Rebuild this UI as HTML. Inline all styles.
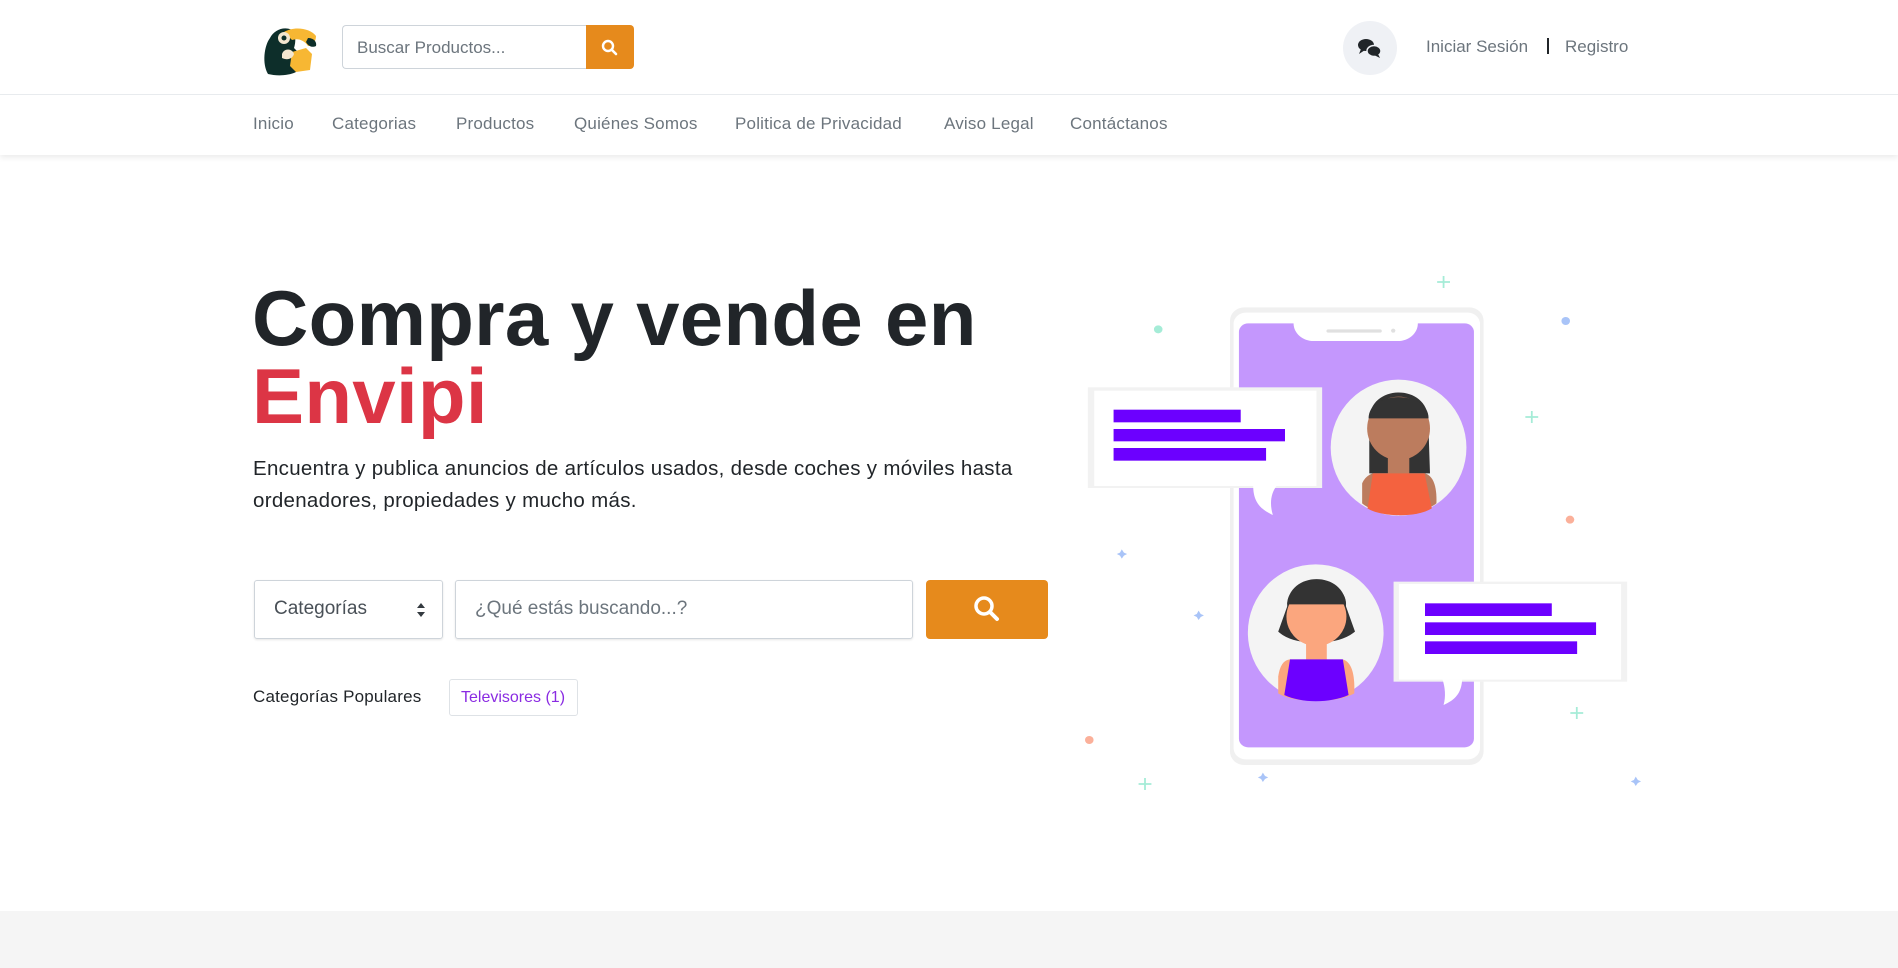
<!DOCTYPE html>
<html><head><meta charset="utf-8">
<style>
*{box-sizing:border-box;margin:0;padding:0}
body{width:1898px;height:968px;overflow:hidden;background:#fff;font-family:"Liberation Sans",sans-serif;position:relative}
.abs{position:absolute}
.nav a{position:absolute;top:114px;font-size:17px;color:#6c757d;text-decoration:none;white-space:nowrap;letter-spacing:0.2px}
</style></head><body>
<!-- header -->
<div class="abs" style="left:0;top:0;width:1898px;height:95px;border-bottom:1px solid #e9ecef"></div>
<svg class="abs" style="left:260px;top:24px" width="58" height="52" viewBox="0 0 58 52">
<path d="M8 50 C2 40 4 22 10 14 C14 6 24 2 32 6 C36 10 36 18 34 24 L40 30 L36 48 C28 52 16 52 8 50Z" fill="#0d2e2a"/>
<path d="M24 8 C34 2 50 4 56 12 C56 18 52 22 48 22 C44 16 38 14 32 16Z" fill="#f7b733"/>
<path d="M48 14 C54 14 57 18 56 22 C52 24 48 22 46 18Z" fill="#0d2e2a"/>
<circle cx="24" cy="14" r="6" fill="#f3e6d0"/><circle cx="24" cy="14" r="2.5" fill="#0d2e2a"/>
<path d="M32 28 L46 24 L52 30 L50 46 L36 48 L30 42Z" fill="#f7b733"/>
<path d="M22 30 C24 24 32 24 34 30 C32 36 26 36 22 34Z" fill="#f3e6d0"/>
</svg>
<div class="abs" style="left:342px;top:25px;width:245px;height:44px;border:1px solid #ced4da;border-right:none;border-radius:4px 0 0 4px;font-size:17px;color:#6c757d;padding:12px 14px">Buscar Productos...</div>
<div class="abs" style="left:586px;top:25px;width:48px;height:44px;background:#e68a1c;border-radius:0 4px 4px 0"></div>
<svg class="abs" style="left:601px;top:39px" width="17" height="17" viewBox="0 0 17 17"><circle cx="7" cy="7" r="5" fill="none" stroke="#fff" stroke-width="2.4"/><path d="M11 11 L15 15" stroke="#fff" stroke-width="2.6" stroke-linecap="round"/></svg>
<div class="abs" style="left:1343px;top:21px;width:54px;height:54px;border-radius:50%;background:#eff1f5"></div>
<svg class="abs" style="left:1356px;top:36px" width="28" height="24" viewBox="0 0 28 24"><ellipse cx="10" cy="9" rx="8" ry="6" fill="#212529"/><path d="M5 13 L3 18 L9 14Z" fill="#212529"/><ellipse cx="18" cy="15" rx="7" ry="5.5" fill="#212529" stroke="#eff1f5" stroke-width="1.5"/><path d="M22 18 L24 22 L18 19Z" fill="#212529"/></svg>
<div class="abs" style="left:1426px;top:37px;font-size:17px;color:#6c757d">Iniciar Sesión</div>
<div class="abs" style="left:1547px;top:38px;width:2px;height:16px;background:#212529"></div>
<div class="abs" style="left:1565px;top:37px;font-size:17px;color:#6c757d">Registro</div>
<!-- nav -->
<div class="abs" style="left:0;top:95px;width:1898px;height:60px;background:#fff;box-shadow:0 3px 5px rgba(0,0,0,0.07)"></div>
<div class="nav">
<a style="left:253px">Inicio</a><a style="left:332px">Categorias</a><a style="left:456px">Productos</a><a style="left:574px">Quiénes Somos</a><a style="left:735px">Politica de Privacidad</a><a style="left:944px">Aviso Legal</a><a style="left:1070px">Contáctanos</a>
</div>
<!-- hero -->
<div class="abs" style="left:252px;top:278px;font-size:78px;font-weight:bold;color:#212529;line-height:80px;letter-spacing:0.3px;white-space:nowrap">Compra y vende en</div>
<div class="abs" style="left:252px;top:356px;font-size:78px;font-weight:bold;color:#dc3545;line-height:80px;letter-spacing:0.3px">Envipi</div>
<div class="abs" style="left:253px;top:453px;width:800px;font-size:20.5px;line-height:32px;color:#212529;letter-spacing:0.3px">Encuentra y publica anuncios de artículos usados, desde coches y móviles hasta ordenadores, propiedades y mucho más.</div>
<div class="abs" style="left:254px;top:580px;width:189px;height:59px;border:1px solid #ced4da;border-radius:3px;box-shadow:0 1px 2px rgba(0,0,0,.1);font-size:19px;color:#495057;padding:17px 19px">Categorías</div>
<svg class="abs" style="left:416px;top:602px" width="10" height="16" viewBox="0 0 10 16"><path d="M1 6 L5 1 L9 6Z M1 10 L5 15 L9 10Z" fill="#343a40"/></svg>
<div class="abs" style="left:455px;top:580px;width:458px;height:59px;border:1px solid #ced4da;border-radius:3px;box-shadow:0 1px 2px rgba(0,0,0,.1);font-size:19px;color:#6c757d;padding:17px 19px">¿Qué estás buscando...?</div>
<div class="abs" style="left:926px;top:580px;width:122px;height:59px;background:#e68a1c;border-radius:4px"></div>
<svg class="abs" style="left:973px;top:595px" width="28" height="28" viewBox="0 0 28 28"><circle cx="11" cy="11" r="8" fill="none" stroke="#fff" stroke-width="3.5"/><path d="M17 17 L24 24" stroke="#fff" stroke-width="4" stroke-linecap="round"/></svg>
<div class="abs" style="left:253px;top:687px;font-size:17px;color:#212529;letter-spacing:0.2px">Categorías Populares</div>
<div class="abs" style="left:449px;top:679px;width:129px;height:37px;border:1px solid #dee2e6;border-radius:3px;font-size:16px;color:#8a2be2;padding:9px 11px;white-space:nowrap">Televisores (1)</div>
<!-- illustration -->
<svg class="abs" style="left:1080px;top:260px" width="580" height="540" viewBox="0 -30 1624 1620" preserveAspectRatio="none">
<rect x="420" y="112" width="710" height="1373" rx="40" fill="#f0f0f0"/>
<rect x="430" y="128" width="690" height="1340" rx="34" fill="#fff"/>
<rect x="445" y="160" width="658" height="1272" rx="26" fill="#c497fd"/>
<path d="M598 150 L946 150 L946 160 C946 190 920 213 890 213 L654 213 C624 213 598 190 598 160Z" fill="#fff"/>
<rect x="690" y="178" width="155" height="10" rx="5" fill="#e0e0e0"/><circle cx="877" cy="182" r="6" fill="#e0e0e0"/>
<!-- bubble1 -->
<rect x="22" y="352" width="656" height="302" fill="#f2f2f2"/>
<rect x="40" y="362" width="622" height="286" fill="#fff"/>
<path d="M485 648 C485 700 510 720 540 735 C530 700 535 670 550 648Z" fill="#fff"/>
<rect x="94" y="419" width="356" height="38" fill="#6c00ff"/>
<rect x="94" y="477" width="480" height="37" fill="#6c00ff"/>
<rect x="94" y="534" width="427" height="38" fill="#6c00ff"/>
<!-- avatar1 -->
<ellipse cx="892" cy="533" rx="190" ry="204" fill="#f4f4f4"/>
<path d="M810 450 C810 340 975 340 975 450 L980 610 L810 610Z" fill="#333"/>
<rect x="862" y="540" width="60" height="98" rx="16" fill="#bc7c5e"/>
<ellipse cx="892" cy="475" rx="88" ry="95" fill="#bc7c5e"/>
<path d="M808 445 C808 360 976 360 976 445Z" fill="#333"/>
<path d="M790 640 C800 615 820 610 820 610 L965 610 C985 615 1000 640 998 700 C960 735 830 740 790 700Z" fill="#bc7c5e"/>
<path d="M820 610 L965 610 L985 715 C940 745 840 740 805 715Z" fill="#f4623f"/>
<!-- avatar2 -->
<ellipse cx="660" cy="1088" rx="190" ry="205" fill="#f4f4f4"/>
<path d="M580 1010 C580 900 745 900 745 1010 L770 1085 C720 1130 600 1130 555 1085Z" fill="#333"/>
<rect x="633" y="1100" width="58" height="95" rx="16" fill="#fba67e"/>
<ellipse cx="662" cy="1040" rx="84" ry="88" fill="#fba67e"/>
<path d="M580 1003 C580 915 745 915 745 1003Z" fill="#333"/>
<path d="M555 1220 C560 1180 575 1168 590 1168 L735 1168 C760 1175 770 1210 768 1270 C720 1300 600 1300 555 1270Z" fill="#fba67e"/>
<path d="M588 1168 L736 1168 L752 1275 C700 1300 620 1300 572 1275Z" fill="#6c00ff"/>
<!-- bubble2 -->
<rect x="878" y="935" width="654" height="300" fill="#f2f2f2"/>
<rect x="893" y="942" width="622" height="287" fill="#fff"/>
<path d="M1070 1229 C1068 1270 1050 1290 1018 1305 C1025 1280 1022 1250 1015 1229Z" fill="#fff"/>
<rect x="966" y="1000" width="355" height="38" fill="#6c00ff"/>
<rect x="966" y="1057" width="479" height="38" fill="#6c00ff"/>
<rect x="966" y="1114" width="426" height="38" fill="#6c00ff"/>
<!-- decorations -->
<circle cx="219" cy="178" r="12" fill="#a5ecd7"/>
<circle cx="1360" cy="153" r="12" fill="#a9c4f8"/>
<circle cx="1372" cy="749" r="12" fill="#fbb09a"/>
<circle cx="26" cy="1410" r="12" fill="#fbb09a"/>
<g stroke="#a5ecd7" stroke-width="5">
<path d="M1018 18 V54 M1000 36 H1036"/><path d="M1265 423 V459 M1247 441 H1283"/><path d="M1391 1311 V1347 M1373 1329 H1409"/><path d="M182 1524 V1560 M164 1542 H200"/>
</g>
<g fill="#a9c4f8">
<path d="M117 838 L123 848 L132 852 L123 857 L117 866 L112 857 L103 852 L112 848Z"/>
<path d="M332 1022 L338 1032 L347 1036 L338 1041 L332 1050 L327 1041 L318 1036 L327 1032Z"/>
<path d="M512 1508 L518 1518 L527 1522 L518 1527 L512 1536 L507 1527 L498 1522 L507 1518Z"/>
<path d="M1556 1520 L1562 1530 L1571 1534 L1562 1539 L1556 1548 L1551 1539 L1542 1534 L1551 1530Z"/>
</g>
</svg>
<!-- footer band -->
<div class="abs" style="left:0;top:911px;width:1898px;height:57px;background:#f5f5f5"></div>
</body></html>
